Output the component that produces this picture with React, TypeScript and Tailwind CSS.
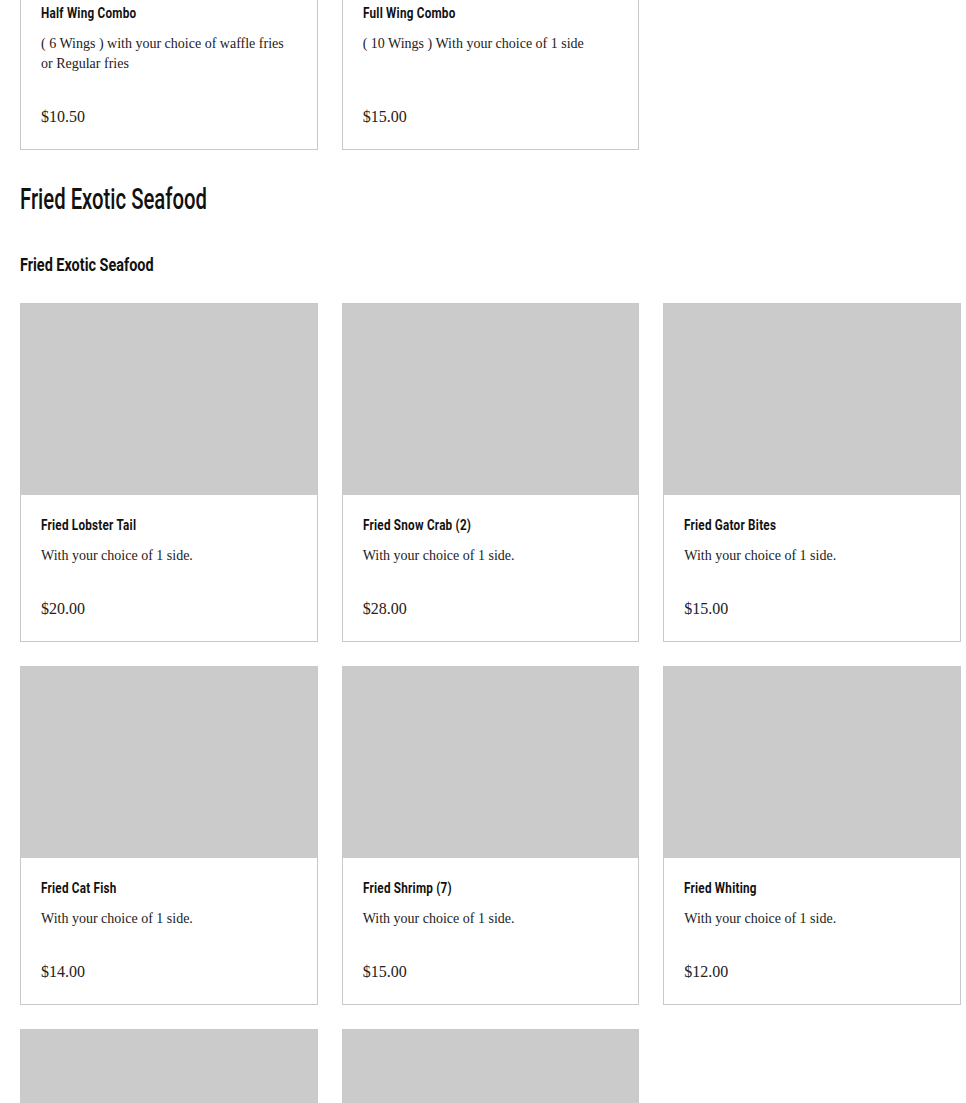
const heading = 'Roboto, "DejaVu Sans", sans-serif';

type Item = { name: string; desc: string; price: string };

const wings: Item[] = [
  { name: "Half Wing Combo", desc: "( 6 Wings ) with your choice of waffle fries or Regular fries", price: "$10.50" },
  { name: "Full Wing Combo", desc: "( 10 Wings ) With your choice of 1 side", price: "$15.00" },
];

const seafood: Item[] = [
  { name: "Fried Lobster Tail", desc: "With your choice of 1 side.", price: "$20.00" },
  { name: "Fried Snow Crab (2)", desc: "With your choice of 1 side.", price: "$28.00" },
  { name: "Fried Gator Bites", desc: "With your choice of 1 side.", price: "$15.00" },
  { name: "Fried Cat Fish", desc: "With your choice of 1 side.", price: "$14.00" },
  { name: "Fried Shrimp (7)", desc: "With your choice of 1 side.", price: "$15.00" },
  { name: "Fried Whiting", desc: "With your choice of 1 side.", price: "$12.00" },
  { name: "Fried Fish Sandwich", desc: "With your choice of 1 side.", price: "$10.00" },
  { name: "Fried Scallops", desc: "With your choice of 1 side.", price: "$16.00" },
];

function Card({ item }: { item: Item }) {
  return (
    <div className="flex flex-col border border-[#c9c9c9] bg-white">
      <div className="h-[191px] bg-[#cbcbcb]" />
      <div className="flex flex-1 flex-col px-5 pt-[21px] pb-5">
        <h4 className="text-[15px] leading-[18px] font-bold text-[#111]" style={{ fontFamily: heading }}>
          <span className="inline-block origin-left scale-x-[0.78] tracking-[0.3px] whitespace-nowrap">{item.name}</span>
        </h4>
        <p className="mt-3 text-[14px] leading-[20px] text-[#222]">{item.desc}</p>
        <div className="mt-auto pt-[31px] text-[16px] leading-[24px] text-[#222]">{item.price}</div>
      </div>
    </div>
  );
}

export default function App() {
  return (
    <div className="min-h-screen bg-white" style={{ fontFamily: '"Liberation Serif", "Times New Roman", serif' }}>
      <div className="-mt-[209px] px-5 pr-[5px]">
        <div className="grid grid-cols-3 gap-6">
          {wings.map((w) => (
            <Card key={w.name} item={w} />
          ))}
        </div>

        <h2 className="mt-[33px] text-[29px] leading-[32px] font-medium text-[#111]" style={{ fontFamily: heading }}>
          <span className="inline-block origin-left scale-x-[0.7] whitespace-nowrap">Fried Exotic Seafood</span>
        </h2>
        <h3 className="mt-[38px] text-[19px] leading-[24px] font-bold text-[#111]" style={{ fontFamily: heading }}>
          <span className="inline-block origin-left scale-x-[0.76] whitespace-nowrap">Fried Exotic Seafood</span>
        </h3>

        <div className="mt-[26px] grid grid-cols-3 gap-6 pb-10">
          {seafood.map((s) => (
            <Card key={s.name} item={s} />
          ))}
        </div>
      </div>
    </div>
  );
}
